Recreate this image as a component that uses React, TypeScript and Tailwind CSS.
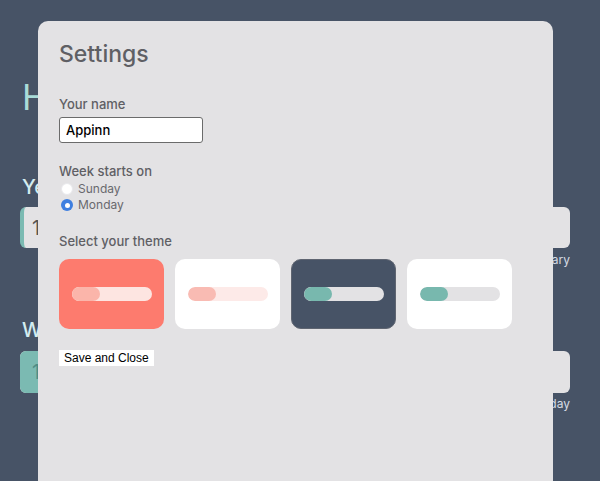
import { useState } from 'react';

const themes = [
  { bg: 'bg-[#fd7b6e]', track: 'bg-[#fde5e1]', fill: 'bg-[#fbb5aa]', ring: '' },
  { bg: 'bg-white', track: 'bg-[#fdeae8]', fill: 'bg-[#f9bbb3]', ring: '' },
  { bg: 'bg-[#475366]', track: 'bg-[#e3e2e4]', fill: 'bg-[#78b8ae]', ring: 'border-[1.5px] border-[#5f6571]' },
  { bg: 'bg-white', track: 'bg-[#e3e2e4]', fill: 'bg-[#78b8ae]', ring: '' },
];

function Radio({ checked, label }: { checked: boolean; label: string }) {
  return (
    <label className="flex items-center gap-[5px] h-[16px] text-[12px] leading-[16px] text-[#69696e]">
      {checked ? (
        <span className="ml-[2px] w-[12px] h-[12px] rounded-full bg-[#3f7fe0] flex items-center justify-center">
          <span className="w-[5px] h-[5px] rounded-full bg-white" />
        </span>
      ) : (
        <span className="ml-[2px] w-[12px] h-[12px] rounded-full bg-white border border-[#e9e9ec]" />
      )}
      {label}
    </label>
  );
}

export default function App() {
  const [name, setName] = useState('Appinn');

  return (
    <div className="relative w-[600px] h-[481px] overflow-hidden bg-[#475366] font-['Inter',sans-serif]">
      {/* page behind the dialog */}
      <div className="pl-[20px] pr-[30px]">
        <h1 className="mt-[77px] ml-[2px] text-[35px] leading-[40px] text-[#a9dcd8]">Hi, Appinn</h1>

        <h2 className="mt-[58px] ml-[2px] text-[20px] leading-[24px] font-medium text-[#d3ecf0]">Year</h2>
        <div className="mt-[8px] h-[41px] rounded-[6px] bg-[#e3e2e4] border-l-4 border-[#7bbab2] flex items-center pl-[8px] text-[20px] text-[#555]">
          18%
        </div>
        <p className="mt-[4px] text-right text-[12px] leading-[16px] text-[#d5dbe4]">7 weeks to February</p>

        <h2 className="mt-[50px] ml-[2px] text-[20px] leading-[24px] font-medium text-[#d3ecf0]">Week</h2>
        <div className="mt-[9px] h-[42px] rounded-[6px] bg-[#e3e2e4] overflow-hidden flex">
          <div className="w-[30%] bg-[#7bbab2] flex items-center pl-[12px] text-[20px] text-[#4f8c86]">14%</div>
        </div>
        <p className="mt-[3px] text-right text-[12px] leading-[16px] text-[#d5dbe4]">6 days to Monday</p>
      </div>

      {/* settings dialog */}
      <div className="absolute left-[38px] top-[21px] w-[515px] h-[500px] rounded-[10px] bg-[#e3e2e4] px-[21px] pt-[17px]">
        <h3 className="text-[23px] leading-[32px] font-medium text-[#5f5f64]">Settings</h3>

        <p className="mt-[24px] text-[13px] leading-[20px] font-medium text-[#5f5f64]">Your name</p>
        <input
          value={name}
          onChange={(e) => setName(e.target.value)}
          className="mt-[3px] w-[144px] h-[26px] rounded-[3px] border-[1.5px] border-[#6b6b6b] bg-white px-[6px] text-[13px] font-medium text-black outline-none"
        />

        <p className="mt-[19px] text-[13px] leading-[19px] font-medium text-[#5f5f64]">Week starts on</p>
        <Radio checked={false} label="Sunday" />
        <Radio checked label="Monday" />

        <p className="mt-[18px] text-[13px] leading-[20px] font-medium text-[#5f5f64]">Select your theme</p>
        <div className="mt-[8px] flex gap-[11px]">
          {themes.map((t, i) => (
            <div key={i} className={`w-[105px] h-[70px] rounded-[10px] flex items-center justify-center ${t.bg} ${t.ring}`}>
              <div className={`w-[80px] h-[14px] rounded-full overflow-hidden ${t.track}`}>
                <div className={`w-[28px] h-full rounded-full ${t.fill}`} />
              </div>
            </div>
          ))}
        </div>

        <button className="mt-[21px] h-[16px] bg-white px-[5px] text-[12px] leading-[16px] text-black font-['Liberation_Sans',sans-serif]">
          Save and Close
        </button>
      </div>
    </div>
  );
}
